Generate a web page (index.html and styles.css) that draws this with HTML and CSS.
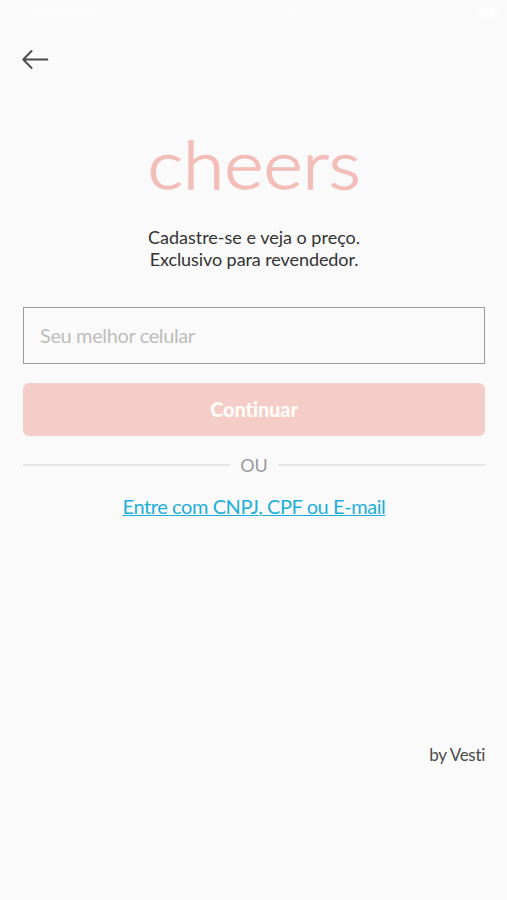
FILE: index.html
```html
<!DOCTYPE html>
<html lang="pt-BR">
<head>
<meta charset="utf-8">
<meta name="viewport" content="width=device-width, initial-scale=1">
<title>Cheers</title>
<link rel="stylesheet" href="styles.css">
</head>
<body>
<main class="screen">
  <header class="status">
    <i class="carrier"></i>
    <i class="clock"></i>
    <i class="battery"></i>
  </header>
  <nav class="nav">
    <svg class="back" width="28" height="20" viewBox="0 0 28 20" fill="none" stroke="#4a4a4a" stroke-width="1.8" stroke-linecap="round" stroke-linejoin="round"><path d="M25.4 9.5H1.2M9.6 1L1.2 9.5L9.6 18"/></svg>
  </nav>
  <h1 class="logo"><span>cheers</span></h1>
  <p class="intro"><span class="intro-a">Cadastre-se e veja o preço.</span><br><span class="intro-b">Exclusivo para revendedor.</span></p>
  <div class="field"><span>Seu melhor celular</span></div>
  <button class="submit"><span>Continuar</span></button>
  <div class="divider"><span>OU</span></div>
  <a class="alt"><span>Entre com CNPJ, CPF ou E-mail</span></a>
  <footer class="credit"><span>by Vesti</span></footer>
</main>
</body>
</html>
```
FILE: styles.css
```css
* { box-sizing: border-box; }
body { margin: 0; background: #fafafa; font-family: Lato, sans-serif; font-variant-ligatures: none; }
.screen { height: 900px; padding: 0 22px 0 23px; display: flex; flex-direction: column; overflow: hidden; }
.status { height: 28px; padding-top: 8px; display: flex; justify-content: space-between; }
.status i { height: 10px; border-radius: 5px; background: #fefefe; filter: blur(2px); }
.carrier { width: 84px; opacity: .5; }
.clock { width: 34px; opacity: .5; }
.battery { width: 20px; margin-right: -12px; }
.nav { height: 64px; padding-top: 22px; margin-left: -1px; }
.back { display: block; }
.logo { margin: 31px 0 0; height: 80px; line-height: 80px; text-align: center; font-size: 67px; font-weight: 300; color: #f3bdb8; -webkit-text-stroke: 1.4px #f3bdb8; white-space: nowrap; }
.logo span { display: inline-block; transform: scaleX(1.12); }
.intro { margin: 23px 0 0; height: 44px; line-height: 22px; text-align: center; font-size: 18px; color: #333; white-space: nowrap; }
.intro-b { letter-spacing: -.08px; }
.field { margin-top: 37px; height: 57px; flex: none; border: 1px solid #9c9c9c; padding-left: 16px; line-height: 55px; font-size: 20px; letter-spacing: -.38px; color: #bdbdbd; }
.submit { margin-top: 19px; height: 53px; flex: none; border: 0; border-radius: 6px; background: #f4ccc8; color: #fffdf8; font: 900 20px/53px Lato, sans-serif; padding: 0; font-variant-ligatures: none; letter-spacing: -.15px; }
.divider { margin-top: 18px; height: 22px; display: flex; align-items: center; gap: 10px; color: #999; font-size: 18px; }
.divider::before, .divider::after { content: ""; flex: 1; height: 2px; background: #e6e6e6; }
.divider span { line-height: 22px; }
.alt { margin-top: 17px; height: 26px; line-height: 26px; text-align: center; font-size: 20px; letter-spacing: -.42px; color: #1eaedb; text-decoration: underline; text-decoration-thickness: 1px; text-underline-offset: 1px; white-space: nowrap; }
.credit { margin-top: 224px; text-align: right; line-height: 24px; font-size: 17px; letter-spacing: -.3px; color: #4a4a4a; }
```
